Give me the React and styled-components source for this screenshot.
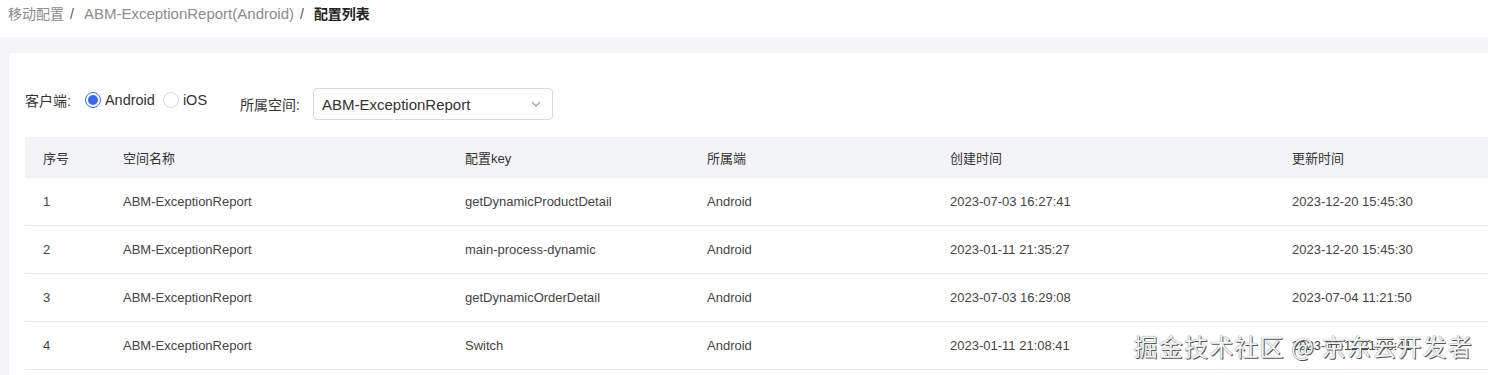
import React from "react";
import styled, { createGlobalStyle } from "styled-components";

const Global = createGlobalStyle`
  html, body { margin: 0; padding: 0; background: #fff; }
  body { font-family: "Liberation Sans", "Noto Sans CJK SC", sans-serif; color: #333; }
  * { box-sizing: border-box; }
`;

const Page = styled.div`
  position: relative;
  width: 1488px;
  height: 375px;
  overflow: hidden;
  display: flex;
  flex-direction: column;
`;

const Crumbs = styled.nav`
  height: 37px;
  padding: 4px 0 0 8px;
  display: flex;
  align-items: flex-start;
  font-size: 14px;
  line-height: 20px;
  background: #fff;
`;

const Crumb = styled.span`
  color: ${(p) => (p.$current ? "#222" : "#8c8c8c")};
  font-weight: ${(p) => (p.$current ? 700 : 400)};
  font-size: ${(p) => (p.$latin ? "15px" : "14px")};
`;

const Sep = styled.span`
  color: #555;
  margin: 0 ${(p) => p.$r}px 0 6px;
`;

const Content = styled.main`
  flex: 1;
  background: #f4f5f7;
  padding: 16px 0 0 9px;
  display: flex;
`;

const Card = styled.section`
  flex: 1;
  background: #fff;
  padding: 35px 0 0 16px;
  display: flex;
  flex-direction: column;
`;

const Filters = styled.div`
  display: flex;
  align-items: flex-start;
  height: 32px;
`;

const RadioItem = styled.div`
  display: flex;
  align-items: center;
  height: 24px;
  font-size: 14px;
`;

const SelectItem = styled.div`
  display: flex;
  align-items: center;
  height: 32px;
  margin-left: 25px;
  font-size: 14px;
`;

const Label = styled.span`
  color: #333;
  margin-right: ${(p) => p.$gap}px;
`;

const Radio = styled.label`
  display: flex;
  align-items: center;
  margin-right: 8px;
  font-size: 14.5px;
  color: #333;
`;

const Dot = styled.span`
  width: 16px;
  height: 16px;
  border-radius: 50%;
  border: 1px solid ${(p) => (p.$on ? "#3867f4" : "#dcdcdc")};
  display: flex;
  align-items: center;
  justify-content: center;
  margin-right: 4px;
  background: #fff;
  &::after {
    content: "";
    width: 10px;
    height: 10px;
    border-radius: 50%;
    background: ${(p) => (p.$on ? "#3867f4" : "transparent")};
  }
`;

const Select = styled.div`
  width: 240px;
  height: 32px;
  border: 1px solid #dadada;
  border-radius: 4px;
  display: flex;
  align-items: center;
  justify-content: space-between;
  padding: 0 10px 0 8px;
  font-size: 15px;
  color: #333;
`;

const Table = styled.div`
  margin-top: 17px;
  display: flex;
  flex-direction: column;
  font-size: 13px;
`;

const Row = styled.div`
  display: grid;
  grid-template-columns: 80px 342px 242px 243px 342px 1fr;
  height: ${(p) => (p.$head ? 41 : 48)}px;
  align-items: center;
  background: ${(p) => (p.$head ? "#f3f4f6" : "#fff")};
  border-bottom: 1px solid ${(p) => (p.$head ? "#eceef1" : "#e9e9e9")};
  color: ${(p) => (p.$head ? "#333" : "#444")};
`;

const Cell = styled.div`
  padding-left: 18px;
  white-space: nowrap;
`;

const Watermark = styled.div`
  position: absolute;
  right: 15px;
  bottom: 15px;
  font-size: 24px;
  line-height: 28px;
  color: #f4f4f4;
  font-family: "Noto Sans CJK SC", sans-serif;
  text-shadow: 1px 1px 0 #555, 0 0 1px #666;
  letter-spacing: 1.2px;
`;

const Chevron = () => (
  <svg width="12" height="12" viewBox="0 0 12 12" fill="none">
    <path d="M2.5 4.5 L6 8 L9.5 4.5" stroke="#9a9a9a" strokeWidth="1.1" strokeLinecap="round" strokeLinejoin="round" />
  </svg>
);

const head = ["序号", "空间名称", "配置key", "所属端", "创建时间", "更新时间"];
const rows = [
  ["1", "ABM-ExceptionReport", "getDynamicProductDetail", "Android", "2023-07-03 16:27:41", "2023-12-20 15:45:30"],
  ["2", "ABM-ExceptionReport", "main-process-dynamic", "Android", "2023-01-11 21:35:27", "2023-12-20 15:45:30"],
  ["3", "ABM-ExceptionReport", "getDynamicOrderDetail", "Android", "2023-07-03 16:29:08", "2023-07-04 11:21:50"],
  ["4", "ABM-ExceptionReport", "Switch", "Android", "2023-01-11 21:08:41", "2023-01-11 21:08:41"],
];

export default function App() {
  return (
    <>
      <Global />
      <Page>
        <Crumbs>
          <Crumb>移动配置</Crumb>
          <Sep $r={10}>/</Sep>
          <Crumb $latin>ABM-ExceptionReport(Android)</Crumb>
          <Sep $r={10}>/</Sep>
          <Crumb $current>配置列表</Crumb>
        </Crumbs>
        <Content>
          <Card>
            <Filters>
              <RadioItem>
                <Label $gap={14}>客户端:</Label>
                <Radio>
                  <Dot $on />
                  Android
                </Radio>
                <Radio>
                  <Dot />
                  iOS
                </Radio>
              </RadioItem>
              <SelectItem>
                <Label $gap={13}>所属空间:</Label>
                <Select>
                  ABM-ExceptionReport
                  <Chevron />
                </Select>
              </SelectItem>
            </Filters>
            <Table>
              <Row $head>
                {head.map((h) => (
                  <Cell key={h}>{h}</Cell>
                ))}
              </Row>
              {rows.map((r) => (
                <Row key={r[0]}>
                  {r.map((c, i) => (
                    <Cell key={i}>{c}</Cell>
                  ))}
                </Row>
              ))}
            </Table>
          </Card>
        </Content>
        <Watermark>掘金技术社区 @ 京东云开发者</Watermark>
      </Page>
    </>
  );
}
